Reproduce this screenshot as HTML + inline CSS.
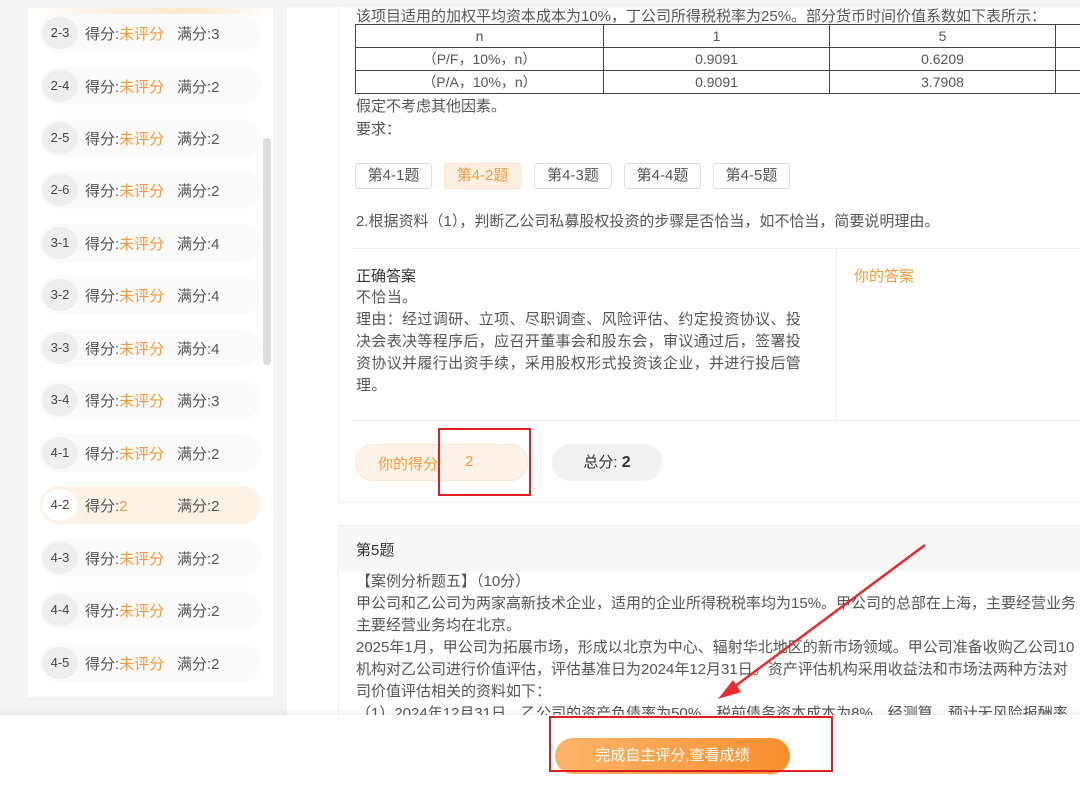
<!DOCTYPE html>
<html><head><meta charset="utf-8"><style>
*{margin:0;padding:0;box-sizing:border-box}
html,body{overflow:hidden}
body{width:1080px;height:789px;background:#f4f4f4;font-family:"Liberation Sans","Noto Sans CJK SC",sans-serif;position:relative;color:#333}
.left{position:absolute;left:28px;top:16px;width:245px;height:681px;background:#fff}
.topfade{position:absolute;left:28px;top:8px;width:245px;height:8px;background:linear-gradient(90deg,#fff,#fdf0e0,#fde8d0,#fff)}
.sb{position:absolute;left:263px;top:138px;width:8px;height:227px;background:#ddd;border-radius:4px}
.row{position:absolute;left:40px;width:221px;height:38px;border-radius:19px;background:#fafafa;font-size:15px;color:#555}
.row .c{position:absolute;left:2px;top:3px;width:36px;height:32px;border-radius:50%;background:#eee;font-size:13px;text-align:center;line-height:32px;color:#444}
.row .s{position:absolute;left:45px;top:9px}
.row .f{position:absolute;left:137px;top:9px}
.o{color:#f39a3a !important}
.row.act{background:#fdf2e6}
.row.act .c{background:#fff}
.main{position:absolute;left:287px;top:7px;width:793px;height:710px;background:#fff}
.card{position:absolute;left:338px;top:0;width:742px;height:503px;border:1px solid #f0f0f0;border-top:none;border-right:none}
.t{position:absolute;left:356px;font-size:15px;color:#555;white-space:nowrap}
.tw{position:absolute;left:355px;top:24px;width:725px;height:72px;overflow:hidden}
table{border-collapse:collapse;font-size:14px;color:#555;table-layout:fixed;width:926px}
td{border:1px solid #444;height:23px;text-align:center;padding:0;overflow:hidden;white-space:nowrap}
.tab{position:absolute;top:163px;height:26px;border:1px solid #ddd;border-radius:3px;font-size:15px;line-height:24px;text-align:center;color:#555;background:#fff}
.tab.a{background:#fdf0e2;border-color:#fde3c8;color:#f39a3a}
.card2{position:absolute;left:338px;top:525px;width:742px;height:200px;background:#fff;border:1px solid #f0f0f0;border-right:none}
.bottom{position:absolute;left:0;top:715px;width:1080px;height:74px;background:#fff;box-shadow:0 -3px 6px rgba(0,0,0,.06)}
.btn{position:absolute;left:555px;top:738px;width:235px;height:36px;border-radius:18px;background:linear-gradient(90deg,#fbb56a,#f7902f);color:#fff;font-size:15px;text-align:center;line-height:36px}
.clip{position:absolute;left:356px;top:571px;width:724px;height:150px;overflow:hidden;font-size:15px;color:#555;white-space:nowrap;line-height:22px}
</style></head><body>
<div class="topfade"></div>
<div class="left"></div>
<div class="sb"></div>
<div class="row" style="top:14px"><span class="c">2-3</span><span class="s">得分:<span class="o">未评分</span></span><span class="f">满分:3</span></div>
<div class="row" style="top:67px"><span class="c">2-4</span><span class="s">得分:<span class="o">未评分</span></span><span class="f">满分:2</span></div>
<div class="row" style="top:119px"><span class="c">2-5</span><span class="s">得分:<span class="o">未评分</span></span><span class="f">满分:2</span></div>
<div class="row" style="top:171px"><span class="c">2-6</span><span class="s">得分:<span class="o">未评分</span></span><span class="f">满分:2</span></div>
<div class="row" style="top:224px"><span class="c">3-1</span><span class="s">得分:<span class="o">未评分</span></span><span class="f">满分:4</span></div>
<div class="row" style="top:276px"><span class="c">3-2</span><span class="s">得分:<span class="o">未评分</span></span><span class="f">满分:4</span></div>
<div class="row" style="top:329px"><span class="c">3-3</span><span class="s">得分:<span class="o">未评分</span></span><span class="f">满分:4</span></div>
<div class="row" style="top:381px"><span class="c">3-4</span><span class="s">得分:<span class="o">未评分</span></span><span class="f">满分:3</span></div>
<div class="row" style="top:434px"><span class="c">4-1</span><span class="s">得分:<span class="o">未评分</span></span><span class="f">满分:2</span></div>
<div class="row act" style="top:486px"><span class="c">4-2</span><span class="s">得分:<span class="o">2</span></span><span class="f">满分:2</span></div>
<div class="row" style="top:539px"><span class="c">4-3</span><span class="s">得分:<span class="o">未评分</span></span><span class="f">满分:2</span></div>
<div class="row" style="top:591px"><span class="c">4-4</span><span class="s">得分:<span class="o">未评分</span></span><span class="f">满分:2</span></div>
<div class="row" style="top:644px"><span class="c">4-5</span><span class="s">得分:<span class="o">未评分</span></span><span class="f">满分:2</span></div>

<div class="main"></div>
<div class="card"></div>
<div class="t" style="top:5px">该项目适用的加权平均资本成本为10%，丁公司所得税税率为25%。部分货币时间价值系数如下表所示：</div>
<div class="tw"><table><colgroup><col style="width:248px"><col style="width:226px"><col style="width:226px"><col style="width:226px"></colgroup>
<tr><td>n</td><td>1</td><td>5</td><td>6</td></tr>
<tr><td>（P/F，10%，n）</td><td>0.9091</td><td>0.6209</td><td>0.5645</td></tr>
<tr><td>（P/A，10%，n）</td><td>0.9091</td><td>3.7908</td><td>4.3553</td></tr></table></div>
<div class="t" style="top:95px">假定不考虑其他因素。</div>
<div class="t" style="top:118px">要求：</div>
<div class="tab" style="left:355px;width:77px">第4-1题</div>
<div class="tab a" style="left:444px;width:77px">第4-2题</div>
<div class="tab" style="left:534px;width:78px">第4-3题</div>
<div class="tab" style="left:624px;width:77px">第4-4题</div>
<div class="tab" style="left:713px;width:77px">第4-5题</div>
<div class="t" style="top:210px">2.根据资料（1），判断乙公司私募股权投资的步骤是否恰当，如不恰当，简要说明理由。</div>
<div style="position:absolute;left:352px;top:248px;width:728px;height:1px;background:#eee"></div>
<div style="position:absolute;left:836px;top:249px;width:1px;height:171px;background:#eee"></div>
<div style="position:absolute;left:352px;top:420px;width:728px;height:1px;background:#eee"></div>
<div class="t" style="top:265px;color:#333">正确答案</div>
<div class="t" style="top:287px;line-height:22px;letter-spacing:0.35px">不恰当。<br>理由：经过调研、立项、尽职调查、风险评估、约定投资协议、投<br>决会表决等程序后，应召开董事会和股东会，审议通过后，签署投<br>资协议并履行出资手续，采用股权形式投资该企业，并进行投后管<br>理。</div>
<div class="t o" style="top:265px;left:854px">你的答案</div>
<div style="position:absolute;left:355px;top:444px;width:173px;height:37px;border-radius:18px;background:#fdf3e8;border:1px solid #fbe6d0"></div>
<div class="t o" style="top:453px;left:378px">你的得分</div>
<div class="t o" style="top:453px;left:465px">2</div>
<div style="position:absolute;left:552px;top:444px;width:110px;height:37px;border-radius:18px;background:#f2f2f2;font-size:15px;text-align:center;line-height:37px;color:#333">总分: <b style="font-size:16px">2</b></div>

<div class="card2"><div style="height:45px;background:#f8f8f8"></div></div>
<div class="t" style="top:539px;color:#333">第5题</div>
<div class="clip">【案例分析题五】（10分）<br>甲公司和乙公司为两家高新技术企业，适用的企业所得税税率均为15%。甲公司的总部在上海，主要经营业务<br>主要经营业务均在北京。<br>2025年1月，甲公司为拓展市场，形成以北京为中心、辐射华北地区的新市场领域。甲公司准备收购乙公司10<br>机构对乙公司进行价值评估，评估基准日为2024年12月31日。资产评估机构采用收益法和市场法两种方法对<br>司价值评估相关的资料如下：<br>（1）2024年12月31日，乙公司的资产负债率为50%，税前债务资本成本为8%，经测算，预计无风险报酬率</div>

<div class="bottom"></div>
<div class="btn">完成自主评分,查看成绩</div>
<div style="position:absolute;left:549px;top:716px;width:284px;height:56px;border:2px solid #e02020"></div>
<div style="position:absolute;left:438px;top:428px;width:93px;height:68px;border:2px solid #e02020"></div>
<svg style="position:absolute;left:0;top:0" width="1080" height="789"><line x1="925" y1="545" x2="730" y2="690" stroke="#e52b2b" stroke-width="2.5"/><polygon points="718,699 733,680 741,692" fill="#e52b2b"/></svg>
</body></html>
